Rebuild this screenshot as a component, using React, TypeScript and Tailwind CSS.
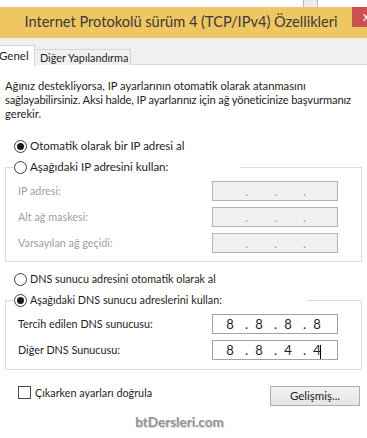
import { Fragment } from "react";

function Radio({ checked }: { checked?: boolean }) {
  return (
    <span className="flex h-[13px] w-[13px] shrink-0 items-center justify-center rounded-full border border-[#3c3c3c] bg-white">
      {checked && <span className="h-[7px] w-[7px] rounded-full bg-[#1a1a1a]" />}
    </span>
  );
}

function RadioRow({ label, checked, small }: { label: string; checked?: boolean; small?: boolean }) {
  return (
    <div className="flex h-[16px] items-center gap-[3px] pl-[14px]">
      <Radio checked={checked} />
      <span className={`whitespace-nowrap ${small ? "text-[10.8px]" : ""}`}>{label}</span>
    </div>
  );
}

interface IpFieldProps {
  values: string[];
  disabled?: boolean;
  caret?: boolean;
}

function IpField({ values, disabled, caret }: IpFieldProps) {
  return (
    <div
      className={`flex h-[20px] w-[126px] items-center border pl-[6px] text-[13px] ${disabled ? "border-[#b4b4b4] bg-[#f0f0f0] text-[#a8a8a8]" : "border-[#a3a3a3] bg-white text-[#1e1e1e]"}`}
    >
      {values.map((v, i) => (
        <Fragment key={i}>
          <span className="relative w-[22px] text-center">
            {v}
            {caret && i === 3 && (
              <span className="absolute top-[2px] left-[14px] h-[14px] w-px bg-black" />
            )}
          </span>
          {i < 3 && <span className="w-[7px] text-right">.</span>}
        </Fragment>
      ))}
    </div>
  );
}

function FieldRow({
  label,
  values,
  disabled,
  caret,
}: {
  label: string;
  values: string[];
  disabled?: boolean;
  caret?: boolean;
}) {
  return (
    <div className="flex h-[20px] items-center justify-between pr-[23px] pl-[12px]">
      <span
        className={`text-[10.8px] whitespace-nowrap ${disabled ? "text-[#a0a0a0]" : "text-[#1e1e1e]"}`}
      >
        {label}
      </span>
      <IpField values={values} disabled={disabled} caret={caret} />
    </div>
  );
}

export default function App() {
  const empty = ["", "", "", ""];

  return (
    <div className="h-[438px] w-[367px] overflow-hidden bg-white text-[11.5px] leading-[14px] text-[#1e1e1e] [font-family:Lato,sans-serif]">
      {/* background window peeking over the top */}
      <div className="flex h-[7px] overflow-hidden">
        <span className="mt-[-11px] w-[303px] shrink-0 pl-[2px] text-[12px] text-[#555]">adresi al</span>
        <div className="h-[7px] w-[15px] border-x border-[#b9b9b9] bg-[#ececec]" />
      </div>

      {/* Title bar */}
      <div className="flex h-[31px] bg-[#f0c662]">
        <div className="flex-1 pt-[4px] pl-[10px] text-center text-[14.6px] leading-[22px] whitespace-nowrap text-[#3a3a3a]">
          Internet Protokolü sürüm 4 (TCP/IPv4) Özellikleri
        </div>
        <div className="h-[20px] w-[15px] overflow-hidden bg-[#c9514f] pl-[11px] text-[13px] leading-[18px] text-white">
          x
        </div>
      </div>

      {/* Tabs */}
      <div className="flex h-[27px] items-end bg-[#f0f0f0]">
        <div className="relative z-10 -mb-px flex h-[21px] w-[35px] items-center border-t border-r border-[#d4d4d4] bg-white">
          <span className="-ml-[1px]">Genel</span>
        </div>
        <div className="flex h-[16px] w-[96px] items-center border-t border-r border-[#d4d4d4] bg-[#f0f0f0] pl-[5px] text-[10.8px] whitespace-nowrap">
          Diğer Yapılandırma
        </div>
        <div className="h-px flex-1 bg-[#d9d9d9]" />
      </div>

      {/* Content */}
      <div className="pt-[14px]">
        <p className="pl-[5px] text-[11.2px] whitespace-nowrap">
          Ağınız destekliyorsa, IP ayarlarının otomatik olarak atanmasını
          <br />
          <span className="tracking-[-0.15px]">
            sağlayabilirsiniz. Aksi halde, IP ayarlarınız için ağ yöneticinize başvurmanız
          </span>
          <br />
          gerekir.
        </p>

        <div className="mt-[17px]">
          <RadioRow label="Otomatik olarak bir IP adresi al" checked />
        </div>

        <fieldset className="mx-[5px] mt-[5px] border border-[#dcdcdc] pb-[8px]">
          <legend className="ml-[8px] flex h-[16px] w-[226px] items-center gap-[3px] bg-white">
            <Radio />
            <span className="whitespace-nowrap">Aşağıdaki IP adresini kullan:</span>
          </legend>
          <div className="flex flex-col gap-[6px] pt-[6px]">
            <FieldRow label="IP adresi:" values={empty} disabled />
            <FieldRow label="Alt ağ maskesi:" values={empty} disabled />
            <FieldRow label="Varsayılan ağ geçidi:" values={empty} disabled />
          </div>
        </fieldset>

        <div className="mt-[9px]">
          <RadioRow label="DNS sunucu adresini otomatik olarak al" small />
        </div>

        <fieldset className="mx-[5px] mt-[5px] border border-[#dcdcdc] pb-[9px]">
          <legend className="ml-[8px] flex h-[16px] w-[293px] items-center gap-[3px] bg-white">
            <Radio checked />
            <span className="text-[10.8px] whitespace-nowrap">Aşağıdaki DNS sunucu adreslerini kullan:</span>
          </legend>
          <div className="flex flex-col gap-[6px] pt-[6px]">
            <FieldRow label="Tercih edilen DNS sunucusu:" values={["8", "8", "8", "8"]} />
            <FieldRow label="Diğer DNS Sunucusu:" values={["8", "8", "4", "4"]} caret />
          </div>
        </fieldset>

        <div className="mt-[16px] flex items-start justify-between pr-[7px] pl-[18px]">
          <div className="flex h-[13px] items-center gap-[4px]">
            <span className="h-[13px] w-[13px] border border-[#4a4a4a] bg-white" />
            <span className="text-[10.8px] whitespace-nowrap">Çıkarken ayarları doğrula</span>
          </div>
          <button className="h-[20px] w-[90px] border border-[#acacac] bg-gradient-to-b from-[#f2f2f2] to-[#e5e5e5] text-[11.5px] text-[#1e1e1e]">
            Gelişmiş...
          </button>
        </div>

        <div className="mt-[9px] pr-[8px] text-center text-[13.5px] font-bold text-[#939393] [text-shadow:1px_1px_1px_#d6d6d6]">
          btDersleri.com
        </div>
      </div>
    </div>
  );
}
